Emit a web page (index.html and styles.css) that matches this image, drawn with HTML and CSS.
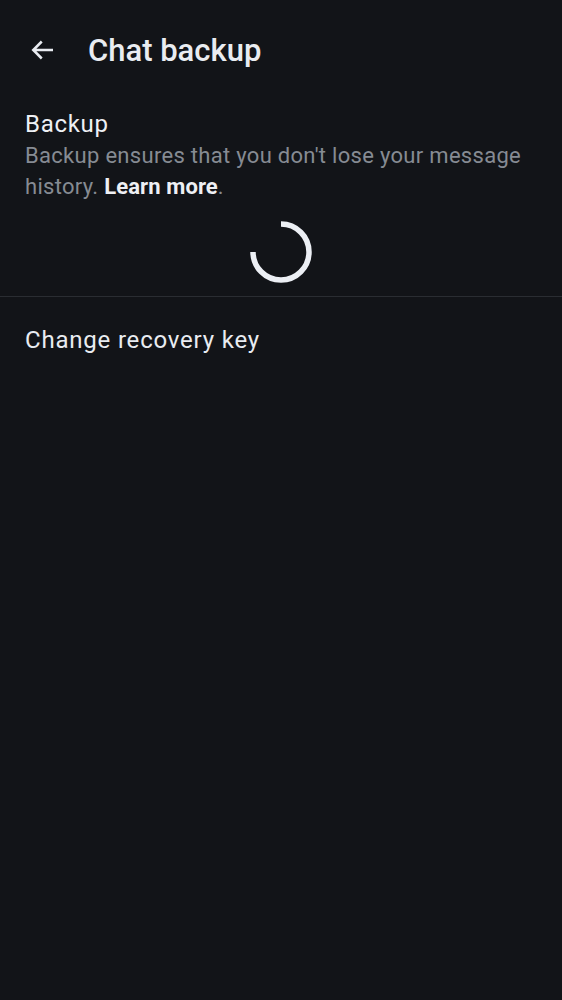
FILE: index.html
```html
<!DOCTYPE html>
<html>
<head>
<meta charset="utf-8">
<link rel="stylesheet" href="styles.css">
</head>
<body>
<div class="app">
  <header class="topbar">
    <button class="back" aria-label="Back">
      <svg width="30" height="30" viewBox="0 0 24 24"><path d="M20 12H4.5M11 5.2L4.2 12l6.8 6.8" fill="none" stroke="#e9ecf1" stroke-width="2"/></svg>
    </button>
    <h1 class="title">Chat backup</h1>
  </header>
  <section class="backup">
    <h2 class="section-title">Backup</h2>
    <p class="desc">Backup ensures that you don't lose your message history. <b class="link">Learn more</b>.</p>
  </section>
  <div class="spinner-wrap">
    <svg class="spinner" width="66" height="66" viewBox="0 0 66 66">
      <path d="M33 5 A28 28 0 1 1 5 33" fill="none" stroke="#eceff4" stroke-width="5.5"/>
    </svg>
  </div>
  <div class="divider"></div>
  <div class="item">Change recovery key</div>
</div>
</body>
</html>
```
FILE: styles.css
```css
html, body {
  margin: 0;
  padding: 0;
  background: #121418;
}
body {
  font-family: Roboto, "Noto Sans", sans-serif;
  color: #e9ecf1;
  width: 562px;
  height: 1000px;
}
.topbar {
  display: flex;
  align-items: center;
  height: 100px;
  padding-left: 28px;
}
.back {
  background: none;
  border: 0;
  padding: 0;
  width: 30px;
  height: 30px;
  display: flex;
  align-items: center;
  justify-content: center;
  margin-right: 30px;
}
.title {
  margin: 0;
  font-size: 31px;
  font-weight: 500;
  color: #e9ecf1;
}
.backup {
  padding: 0 20px 0 25px;
}
.section-title {
  margin: 8px 0 0;
  font-size: 24px;
  font-weight: 400;
  letter-spacing: 0.7px;
  line-height: 32px;
  color: #eef0f4;
}
.desc {
  margin: 0;
  font-size: 22px;
  letter-spacing: 0.3px;
  line-height: 31px;
  color: #868b93;
}
.link {
  color: #eef0f4;
  font-weight: 700;
  letter-spacing: 0.1px;
}
.spinner-wrap {
  display: flex;
  justify-content: center;
  padding: 17px 0 11px;
}
.divider {
  height: 1px;
  background: #2a2d32;
}
.item {
  padding: 29px 25px;
  font-size: 24px;
  letter-spacing: 0.8px;
  color: #e9ecf1;
}
```
